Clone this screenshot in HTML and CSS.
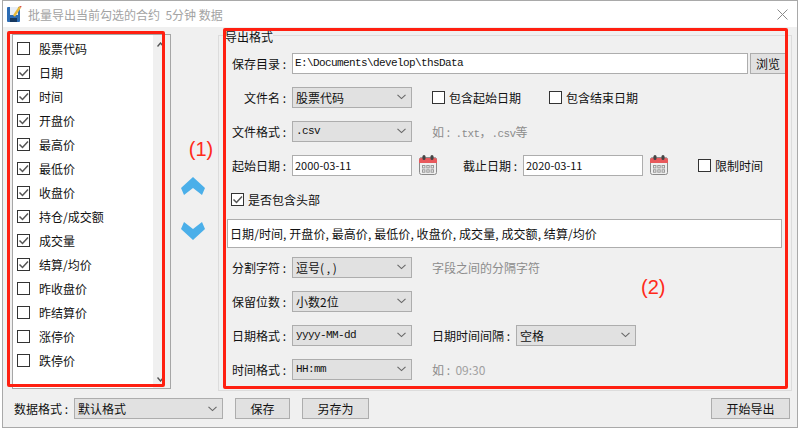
FILE: index.html
```html
<!DOCTYPE html>
<html lang="zh-CN">
<head>
  <meta charset="UTF-8">
  <title>批量导出</title>
  <link rel="stylesheet" href="styles.css">
</head>
<body>
  <svg class="defs" width="0" height="0">
    <symbol id="i-check" viewBox="0 0 11 11">
      <path d="M1.5 5.5 L4.5 8.5 L10 2.5" fill="none" stroke="#555" stroke-width="1.5"/>
    </symbol>
    <symbol id="i-drop" viewBox="0 0 9 6">
      <path d="M0.5 0.8 L4.5 4.6 L8.5 0.8" fill="none" stroke="#666" stroke-width="1.1"/>
    </symbol>
    <symbol id="i-cal" viewBox="0 0 18 20">
      <rect x="0.5" y="2.5" width="17" height="17" rx="2" fill="#efefef" stroke="#8a8a8a"/>
      <path d="M0 5 a2 2 0 0 1 2 -2 h14 a2 2 0 0 1 2 2 v3 h-18 z" fill="#e8595c"/>
      <rect x="3.5" y="0" width="3" height="5" rx="1.5" fill="#444"/>
      <rect x="11.5" y="0" width="3" height="5" rx="1.5" fill="#444"/>
      <g fill="none" stroke="#999">
        <rect x="3.5" y="10.5" width="2.4" height="2.4"/>
        <rect x="7.8" y="10.5" width="2.4" height="2.4"/>
        <rect x="12.1" y="10.5" width="2.4" height="2.4"/>
        <rect x="3.5" y="14.8" width="2.4" height="2.4"/>
        <rect x="7.8" y="14.8" width="2.4" height="2.4"/>
        <rect x="12.1" y="14.8" width="2.4" height="2.4"/>
      </g>
    </symbol>
  </svg>

  <div class="window">
    <div class="titlebar">
      <svg class="app-icon" width="15" height="16" viewBox="0 0 15 16">
        <rect x="0" y="1" width="13" height="15" rx="1" fill="#2c6cb4"/>
        <rect x="3" y="1" width="8" height="8" fill="#e8eef6"/>
        <rect x="3" y="12" width="7" height="4" fill="#16385f"/>
        <path d="M7 10 L13 1" stroke="#e9b93a" stroke-width="2.4"/>
        <path d="M13 1 L14 0" stroke="#d9534f" stroke-width="2"/>
      </svg>
      <span class="title">批量导出当前勾选的合约&nbsp;&nbsp;5分钟 数据</span>
      <svg class="close" width="11" height="11" viewBox="0 0 11 11">
        <path d="M0.5 0.5 L10.5 10.5 M10.5 0.5 L0.5 10.5" stroke="#8a8a8a" fill="none"/>
      </svg>
    </div>

    <div class="main">
      <div class="field-panel">
        <ul class="field-list">
          <li><span class="box"></span>股票代码</li>
          <li><span class="box"><svg><use href="#i-check"/></svg></span>日期</li>
          <li><span class="box"><svg><use href="#i-check"/></svg></span>时间</li>
          <li><span class="box"><svg><use href="#i-check"/></svg></span>开盘价</li>
          <li><span class="box"><svg><use href="#i-check"/></svg></span>最高价</li>
          <li><span class="box"><svg><use href="#i-check"/></svg></span>最低价</li>
          <li><span class="box"><svg><use href="#i-check"/></svg></span>收盘价</li>
          <li><span class="box"><svg><use href="#i-check"/></svg></span>持仓/成交额</li>
          <li><span class="box"><svg><use href="#i-check"/></svg></span>成交量</li>
          <li><span class="box"><svg><use href="#i-check"/></svg></span>结算/均价</li>
          <li><span class="box"></span>昨收盘价</li>
          <li><span class="box"></span>昨结算价</li>
          <li><span class="box"></span>涨停价</li>
          <li><span class="box"></span>跌停价</li>
        </ul>
        <div class="scrollbar">
          <svg width="7" height="5" viewBox="0 0 7 5"><path d="M0.5 4.5 L3.5 1 L6.5 4.5" fill="none" stroke="#555" stroke-width="1.4"/></svg>
          <svg width="7" height="5" viewBox="0 0 7 5"><path d="M0.5 0.5 L3.5 4 L6.5 0.5" fill="none" stroke="#555" stroke-width="1.4"/></svg>
        </div>
        <div class="mark mark-left"></div>
      </div>

      <div class="move-col">
        <div class="note note-one">(1)</div>
        <svg class="move-up" width="24" height="18" viewBox="0 0 24 18">
          <polygon points="12,0 24,11 21,18 12,11 3,18 0,11" fill="#4bafe9"/>
        </svg>
        <svg class="move-down" width="24" height="18" viewBox="0 0 24 18">
          <polygon points="3,0 12,7 21,0 24,7 12,18 0,7" fill="#4bafe9"/>
        </svg>
      </div>

      <div class="group">
        <div class="legend">导出格式</div>

        <div class="row">
          <span class="label">保存目录 :</span>
          <div class="input mono path">E:\Documents\develop\thsData</div>
          <div class="btn browse">浏览</div>
        </div>

        <div class="row">
          <span class="label">文件名 :</span>
          <div class="combo"><span>股票代码</span><svg><use href="#i-drop"/></svg></div>
          <label class="opt opt-start"><span class="box"></span>包含起始日期</label>
          <label class="opt"><span class="box"></span>包含结束日期</label>
        </div>

        <div class="row">
          <span class="label">文件格式 :</span>
          <div class="combo"><span class="mono">.csv</span><svg><use href="#i-drop"/></svg></div>
          <span class="hint">如 :&nbsp;&nbsp;<span class="mono">.txt</span>，<span class="mono">.csv</span>等</span>
        </div>

        <div class="row">
          <span class="label">起始日期 :</span>
          <div class="input date">2000-03-11</div>
          <svg class="cal"><use href="#i-cal"/></svg>
          <span class="label label-end">截止日期 :</span>
          <div class="input date">2020-03-11</div>
          <svg class="cal"><use href="#i-cal"/></svg>
          <label class="opt opt-limit"><span class="box"></span>限制时间</label>
        </div>

        <div class="row">
          <label class="opt opt-head"><span class="box"><svg><use href="#i-check"/></svg></span>是否包含头部</label>
        </div>

        <div class="row">
          <div class="input columns">日期/时间, 开盘价, 最高价, 最低价, 收盘价, 成交量, 成交额, 结算/均价</div>
        </div>

        <div class="row">
          <span class="label">分割字符 :</span>
          <div class="combo"><span>逗号( , )</span><svg><use href="#i-drop"/></svg></div>
          <span class="hint">字段之间的分隔字符</span>
        </div>

        <div class="row">
          <span class="label">保留位数 :</span>
          <div class="combo"><span>小数2位</span><svg><use href="#i-drop"/></svg></div>
        </div>

        <div class="row">
          <span class="label">日期格式 :</span>
          <div class="combo"><span class="mono">yyyy-MM-dd</span><svg><use href="#i-drop"/></svg></div>
          <span class="label label-gap">日期时间间隔 :</span>
          <div class="combo"><span>空格</span><svg><use href="#i-drop"/></svg></div>
        </div>

        <div class="row">
          <span class="label">时间格式 :</span>
          <div class="combo"><span class="mono">HH:mm</span><svg><use href="#i-drop"/></svg></div>
          <span class="hint">如 :&nbsp;&nbsp;<span class="sample">09:30</span></span>
        </div>

        <div class="note note-two">(2)</div>
        <div class="mark mark-right"></div>
      </div>
    </div>

    <div class="bottombar">
      <span class="label-plain">数据格式 :</span>
      <div class="combo combo-format"><span>默认格式</span><svg><use href="#i-drop"/></svg></div>
      <div class="btn btn-save">保存</div>
      <div class="btn btn-saveas">另存为</div>
      <div class="btn btn-start">开始导出</div>
    </div>
  </div>
</body>
</html>
```

FILE: styles.css
```css
* {
  box-sizing: border-box;
}

html, body {
  margin: 0;
  height: 430px;
  overflow: hidden;
  background: #fff;
}

body {
  font-family: "Noto Sans CJK SC", "Liberation Sans", sans-serif;
  font-size: 12px;
  color: #111;
}

.defs {
  position: absolute;
}

.window {
  width: 796px;
  height: 428px;
  margin-left: 2px;
  border: 1px solid #a9a9a9;
  background: #f0f0f0;
  display: flex;
  flex-direction: column;
}

/* title bar */
.titlebar {
  height: 26px;
  background: #fff;
  display: flex;
  align-items: center;
  padding: 0 9px 0 4px;
  flex: none;
}

.app-icon {
  flex: none;
}

.title {
  margin-left: 6px;
  color: #a3a3a3;
  flex: 1;
}

.close {
  flex: none;
}

/* main area */
.main {
  display: flex;
  align-items: flex-start;
  padding: 7px 0 0 9px;
  height: 364px;
  flex: none;
}

.field-panel {
  position: relative;
  width: 159px;
  height: 355px;
  border: 1px solid #a6a6a6;
  background: #fff;
  display: flex;
  flex: none;
}

.field-list {
  list-style: none;
  margin: 0;
  padding: 1px 0 0 4px;
  flex: 1;
}

.field-list li {
  height: 24px;
  display: flex;
  align-items: center;
  gap: 9px;
}

.scrollbar {
  width: 17px;
  background: #f0f0f0;
  display: flex;
  flex-direction: column;
  align-items: flex-start;
  justify-content: space-between;
  padding: 7px 0 6px 4px;
}

.box {
  width: 13px;
  height: 13px;
  border: 1px solid #333;
  background: #fff;
  flex: none;
  display: block;
}

.box svg {
  display: block;
  width: 11px;
  height: 11px;
}

.mark {
  position: absolute;
  border: 3px solid #ff1f10;
  border-radius: 2px;
  pointer-events: none;
}

.mark-left {
  left: -6px;
  right: 5px;
  top: -4px;
  bottom: 1px;
}

.mark-right {
  left: 4px;
  right: 3px;
  top: -8px;
  bottom: 1px;
}

.move-col {
  width: 47px;
  flex: none;
  display: flex;
  flex-direction: column;
  align-items: center;
  padding: 102px 3px 0 0;
}

.note {
  color: #ff2a1a;
  font-family: "Liberation Sans", sans-serif;
  font-size: 20px;
  line-height: 26px;
}

.note-one {
  margin-left: 16px;
  height: 26px;
  margin-bottom: 15px;
}

.move-up {
  margin-bottom: 27px;
}

.note-two {
  position: absolute;
  left: 422px;
  top: 238px;
}

/* export group */
.group {
  position: relative;
  width: 574px;
  height: 356px;
  margin-top: 1px;
  border: 1px solid #dcdcdc;
  flex: none;
}

.legend {
  height: 16px;
  line-height: 16px;
  margin: -7px 0 1px 6px;
  width: max-content;
  background: #f0f0f0;
}

.row {
  height: 34px;
  display: flex;
  align-items: center;
  padding-left: 8px;
}

.label {
  width: 59px;
  margin-right: 6px;
  text-align: right;
  white-space: nowrap;
  flex: none;
}

.label-end {
  width: 53px;
  margin-left: 26px;
  margin-right: 7px;
}

.label-gap {
  width: 78px;
  margin-left: 20px;
  margin-right: 6px;
}

.input {
  height: 21px;
  line-height: 19px;
  border: 1px solid #adadad;
  background: #fff;
  padding: 0 2px;
  white-space: nowrap;
  flex: none;
}

.path {
  width: 456px;
}

.date {
  width: 120px;
  font-size: 11px;
}

.cal {
  width: 18px;
  height: 20px;
  margin-left: 7px;
  flex: none;
}

.columns {
  width: 555px;
  height: 29px;
  line-height: 27px;
  letter-spacing: 0.08px;
}

.mono {
  font-family: "Liberation Mono", monospace;
  font-size: 11px;
  letter-spacing: -0.6px;
}

.combo {
  width: 120px;
  height: 21px;
  border: 1px solid #adadad;
  background: #e1e1e1;
  display: flex;
  align-items: center;
  justify-content: space-between;
  padding: 0 5px 0 3px;
  flex: none;
}

.combo svg {
  width: 9px;
  height: 6px;
  flex: none;
}

.btn {
  height: 21px;
  line-height: 19px;
  border: 1px solid #adadad;
  background: #e1e1e1;
  text-align: center;
  flex: none;
}

.browse {
  width: 36px;
  margin-left: 2px;
}

.opt {
  display: flex;
  align-items: center;
  gap: 4px;
  flex: none;
}

.opt-start {
  margin-left: 20px;
  width: 117px;
}

.opt-limit {
  margin-left: 30px;
}

.opt-head {
  margin-left: 4px;
}

.hint {
  margin-left: 20px;
  color: #8c8c8c;
}

.sample {
  color: #a0a0a0;
}

/* bottom bar */
.bottombar {
  display: flex;
  align-items: center;
  padding: 7px 7px 0 11px;
}

.label-plain {
  width: 60px;
  flex: none;
}

.combo-format {
  width: 149px;
}

.btn-save {
  width: 55px;
  margin-left: 12px;
}

.btn-saveas {
  width: 67px;
  margin-left: 12px;
}

.btn-start {
  width: 79px;
  margin-left: auto;
}
```
